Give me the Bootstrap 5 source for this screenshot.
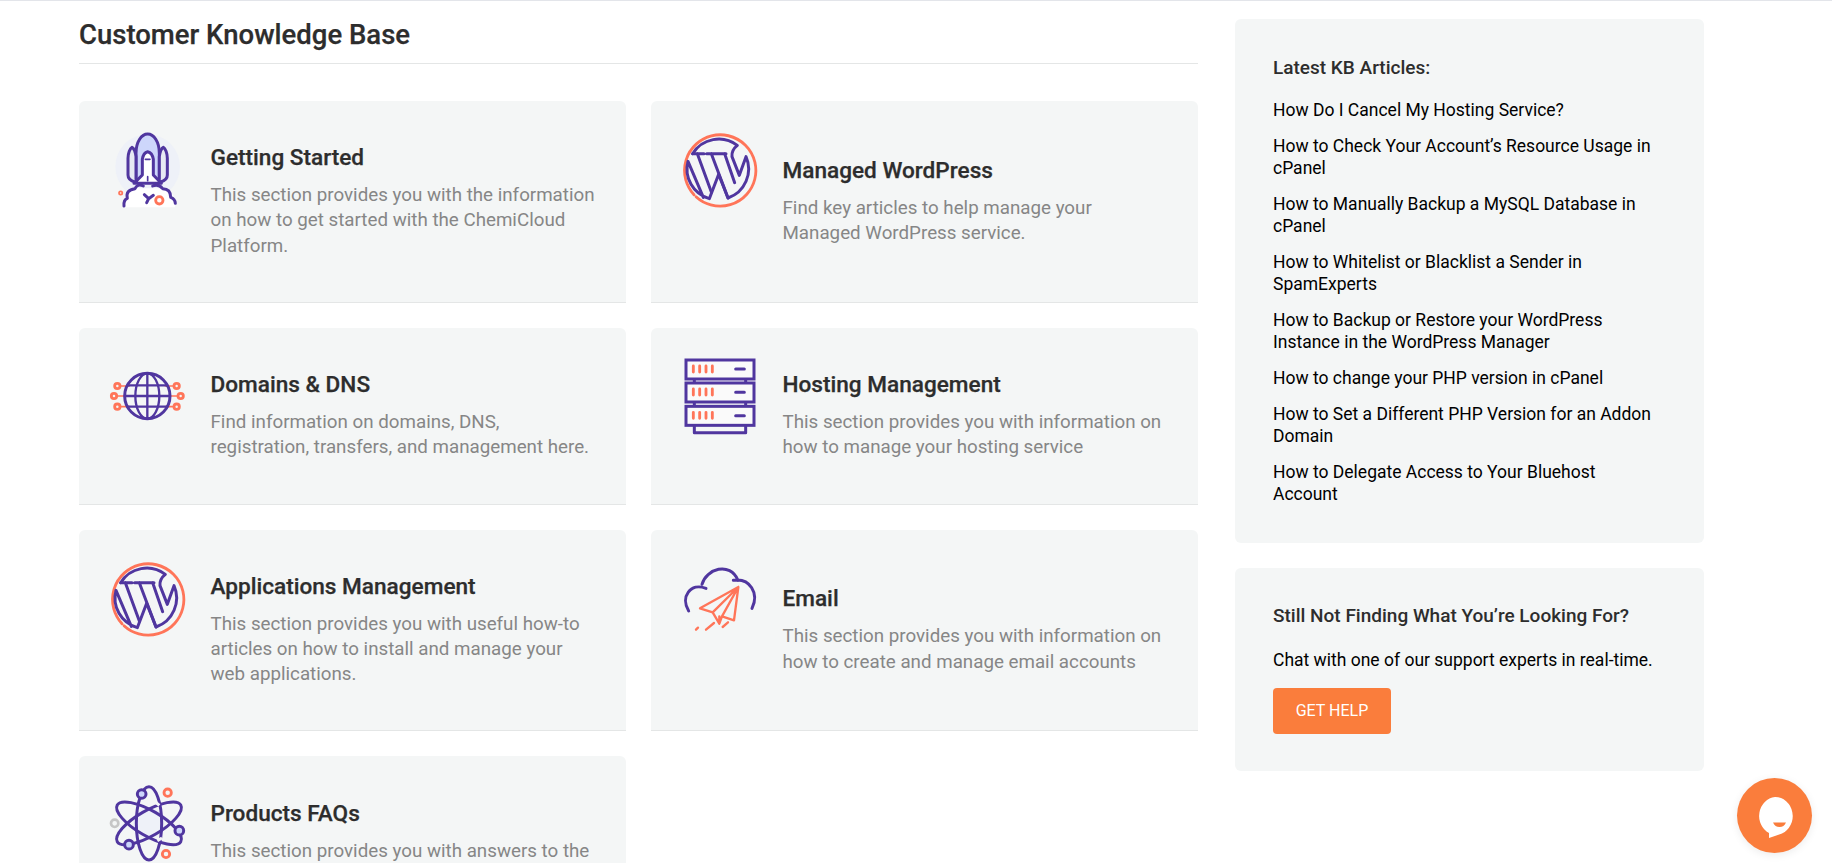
<!doctype html>
<html lang="en">
<head>
  <meta charset="utf-8">
  <meta name="viewport" content="width=device-width, initial-scale=1">
  <title>Customer Knowledge Base</title>
  <link href="https://cdn.jsdelivr.net/npm/bootstrap@5.3.3/dist/css/bootstrap.min.css" rel="stylesheet" crossorigin="anonymous">
  <style>
    html, body { overflow: hidden; height: 863px; }
    body { font-family: Roboto, sans-serif; background: #fff; border-top: 1px solid #e3e5ea; }
    .page-wrap { padding-left: 79px; gap: 37px; }
    .main-col { width: 1119px; flex: none; }
    .side-col { width: 469px; flex: none; margin-top: 18px; }
    .kb-heading { font-size: 27.5px; font-weight: 500; color: #2d2d2d; line-height: 34px; margin: 17px 0 0; padding-bottom: 11px; border-bottom: 1px solid #e4e6e6; margin-bottom: 37px; -webkit-text-stroke: .25px #2d2d2d; }
    .kb-grid { --bs-gutter-x: 25px; --bs-gutter-y: 25px; }
    .kb-card { background: #f4f6f6; border-radius: 6px 6px 0 0; border-bottom: 1px solid #e4e6e6; }
    .kb-icon { width: 100px; height: 100px; flex: none; margin: 20px 11.5px 0 20px; }
    .kb-text { padding: 44.25px 29px 43px 0; }
    .kb-title { font-size: 22.6px; font-weight: 500; color: #2d2d2d; line-height: 25px; margin-bottom: 13px; -webkit-text-stroke: .25px #2d2d2d; }
    .kb-desc { font-size: 18.75px; line-height: 25.2px; color: #868686; margin: 0; }
    .side-box { background: #f4f6f6; border-radius: 6px; padding: 37.5px 46px 37.5px 38px; margin-bottom: 25px; }
    .side-title { font-size: 19px; font-weight: 500; color: #2d2d2d; line-height: 22px; margin: 0; white-space: nowrap; }
    .side-links { margin: 20.5px 0 0; padding: 0; list-style: none; }
    .side-links li { margin-bottom: 14px; font-size: 17.5px; line-height: 22px; }
    .side-links li:last-child { margin-bottom: 0; }
    .side-links a { color: #000; text-decoration: none; }
    .side-copy { font-size: 17.5px; line-height: 22px; color: #000; margin: 21.5px 0 17px; }
    .help-btn { background: #fa7d3c; color: #fff; border: 0; border-radius: 4px; width: 118px; height: 46px; font-size: 16px; padding: 0; }
    .chat-bubble { position: fixed; left: 1737px; top: 778px; width: 75px; height: 75px; border-radius: 50%; background: #fa7d3c; box-shadow: 0 2px 8px rgba(0,0,0,.08); }
    .ic-p { fill: none; stroke: #50369f; stroke-width: 9; stroke-linecap: round; stroke-linejoin: round; }
    .ic-o { fill: none; stroke: #ff7559; stroke-width: 8.5; stroke-linecap: round; stroke-linejoin: round; }
    .ic-g { fill: none; stroke: #c6c6c6; stroke-width: 8; }
    .ic-cut { fill: none; stroke: #f4f6f6; stroke-width: 9; }
    .f-blue { fill: #cdd6fb; }
    .f-pale { fill: #e6e9f3; }
    .f-white { fill: #fff; }
    .w-5 { stroke-width: 5; }
    .w-7 { stroke-width: 7; }
    .cap-b { stroke-linecap: butt; }
  </style>
</head>
<body>
  <svg width="0" height="0" class="d-block position-absolute">
    <symbol id="wp-mark" viewBox="0 0 300 300">
      <path class="ic-o" d="M76 226 A107 107 0 1 1 82 232"/>
      <path class="ic-p" d="M72 103 A92 92 0 0 1 206 78 Q188 92 190 112 L212 168 L232 112 A92 92 0 0 1 178 236 L150 165 L122 238 A92 92 0 0 1 58 126 L104 234"/>
      <path class="ic-p" d="M72 103 H106 M114 103 H172 M86 103 L128 218 M128 103 L178 236 M168 103 L198 190"/>
    </symbol>
  </svg>

  <div class="page-wrap d-flex align-items-start">
    <div class="main-col">
      <h2 class="kb-heading">Customer Knowledge Base</h2>
      <div class="row kb-grid">
        <div class="col-6">
          <div class="kb-card d-flex h-100">
            <svg class="kb-icon" viewBox="-3 3 300 300">
              <circle cx="143" cy="140" r="97" fill="#eef1f8"/>
              <path d="M72 262 V240 Q80 205 105 205 H185 Q218 205 225 245 V262 Z" fill="#fff"/>
              <path class="ic-p f-blue" d="M108 178 V100 C108 65 125 42 143 42 C161 42 178 65 178 100 V178"/>
              <path class="ic-p f-pale" d="M108 178 V110 C106 95 102 85 96 82 C90 85 84 100 84 115 V165 Q84 180 104 186"/>
              <path class="ic-p f-pale" d="M178 178 V110 C180 95 184 85 190 82 C196 85 202 100 202 115 V165 Q202 180 182 186"/>
              <path class="ic-p f-white" d="M127 165 V118 Q130 98 143 95 Q157 98 160 118 V165 L184 190 H102 Z"/>
              <path class="ic-p w-5" d="M136 118 H150 M143 170 V182"/>
              <path class="ic-p" d="M72 258 Q70 240 82 235 Q76 210 105 206 Q112 190 130 198 M158 198 Q175 190 188 206 Q212 206 212 232 Q225 236 226 250 M133 224 L146 236 L160 226 M146 236 L140 248"/>
              <circle class="ic-o" cx="178" cy="241" r="11"/>
              <circle class="ic-o w-5" cx="62" cy="219" r="5"/>
            </svg>
            <div class="kb-text align-self-center">
              <div class="kb-title">Getting Started</div>
              <p class="kb-desc">This section provides you with the information on how to get started with the ChemiCloud Platform.</p>
            </div>
          </div>
        </div>
        <div class="col-6">
          <div class="kb-card d-flex h-100">
            <svg class="kb-icon" viewBox="7 5 300 300"><use href="#wp-mark" width="300" height="300"/></svg>
            <div class="kb-text align-self-center">
              <div class="kb-title">Managed WordPress</div>
              <p class="kb-desc">Find key articles to help manage your Managed WordPress service.</p>
            </div>
          </div>
        </div>
        <div class="col-6">
          <div class="kb-card d-flex h-100">
            <svg class="kb-icon" viewBox="-3 -36 300 300">
              <path class="ic-o w-5" d="M60 78 H88 M50 108 H74 M60 140 H88 M222 78 H196 M234 108 H210 M222 140 H196"/>
              <circle class="ic-o" cx="52" cy="78" r="8"/><circle class="ic-o" cx="42" cy="108" r="8"/><circle class="ic-o" cx="52" cy="140" r="8"/>
              <circle class="ic-o" cx="230" cy="78" r="8"/><circle class="ic-o" cx="242" cy="108" r="8"/><circle class="ic-o" cx="230" cy="140" r="8"/>
              <circle class="ic-p" cx="142" cy="108" r="68"/>
              <ellipse class="ic-p w-7" cx="142" cy="108" rx="36" ry="68"/>
              <path class="ic-p w-7" d="M142 40 V176 M82 76 H202 M75 108 H209 M82 140 H202"/>
            </svg>
            <div class="kb-text align-self-center">
              <div class="kb-title">Domains &amp; DNS</div>
              <p class="kb-desc">Find information on domains, DNS, registration, transfers, and management here.</p>
            </div>
          </div>
        </div>
        <div class="col-6">
          <div class="kb-card d-flex h-100">
            <svg class="kb-icon" viewBox="3 -6 300 300">
              <g fill="#fafafa" stroke="#50369f" stroke-width="9">
                <rect x="48" y="30" width="204" height="57"/>
                <rect x="48" y="99" width="204" height="57"/>
                <rect x="48" y="169" width="204" height="57"/>
              </g>
              <path class="ic-p cap-b" d="M73 87 V99 M227 87 V99 M73 156 V169 M227 156 V169"/>
              <path class="ic-p cap-b" d="M73 226 V248 H227 V226"/>
              <path class="ic-o" d="M70 48 V66 M89 48 V66 M108 48 V66 M127 48 V66 M70 117 V135 M89 117 V135 M108 117 V135 M127 117 V135 M70 187 V205 M89 187 V205 M108 187 V205 M127 187 V205"/>
              <path class="ic-p" d="M197 57 H223 M197 127 H223 M197 197 H223"/>
            </svg>
            <div class="kb-text align-self-center">
              <div class="kb-title">Hosting Management</div>
              <p class="kb-desc">This section provides you with information on how to manage your hosting service</p>
            </div>
          </div>
        </div>
        <div class="col-6">
          <div class="kb-card d-flex h-100">
            <svg class="kb-icon" viewBox="7 5 300 300"><use href="#wp-mark" width="300" height="300"/></svg>
            <div class="kb-text align-self-center">
              <div class="kb-title">Applications Management</div>
              <p class="kb-desc">This section provides you with useful how-to articles on how to install and manage your web applications.</p>
            </div>
          </div>
        </div>
        <div class="col-6">
          <div class="kb-card d-flex h-100">
            <svg class="kb-icon" viewBox="3 -15 300 300">
              <path class="ic-p" d="M56 168 C30 125 62 82 108 100 M96 88 C108 42 180 18 204 76 M190 76 C240 68 268 115 246 160"/>
              <path class="ic-o w-7" d="M205 96 L90 160 L128 172 L148 206 L156 184 L192 196 Z M205 96 L128 172 M205 96 L156 184 L148 206 L148 184"/>
              <path class="ic-o w-7" d="M78 224 L84 218 M108 224 L132 204 M158 216 L174 202"/>
            </svg>
            <div class="kb-text align-self-center">
              <div class="kb-title">Email</div>
              <p class="kb-desc">This section provides you with information on how to create and manage email accounts</p>
            </div>
          </div>
        </div>
        <div class="col-6">
          <div class="kb-card d-flex h-100">
            <svg class="kb-icon" viewBox="-3 6 300 300">
              <circle cx="147" cy="148" r="48" fill="#eef1f8"/>
              <ellipse class="ic-p" cx="147" cy="148" rx="38" ry="110"/>
              <ellipse class="ic-p" cx="147" cy="148" rx="38" ry="110" transform="rotate(60 147 148)"/>
              <ellipse class="ic-p" cx="147" cy="148" rx="38" ry="110" transform="rotate(-60 147 148)"/>
              <path class="ic-cut" d="M80 112 L92 122 M166 84 L178 94 M172 200 L186 192"/>
              <circle class="ic-p f-blue" cx="125" cy="60" r="13"/>
              <circle class="ic-p f-blue" cx="238" cy="170" r="13"/>
              <circle class="ic-p f-blue" cx="87" cy="212" r="13"/>
              <circle class="ic-o" cx="203" cy="56" r="11"/>
              <circle class="ic-o" cx="198" cy="240" r="11"/>
              <circle class="ic-g" cx="44" cy="148" r="11"/>
            </svg>
            <div class="kb-text align-self-center">
              <div class="kb-title">Products FAQs</div>
              <p class="kb-desc">This section provides you with answers to the most common questions about our hosting products.</p>
            </div>
          </div>
        </div>
      </div>
    </div>

    <div class="side-col">
      <div class="side-box">
        <h6 class="side-title">Latest KB Articles:</h6>
        <ul class="side-links">
          <li><a href="#">How Do I Cancel My Hosting Service?</a></li>
          <li><a href="#">How to Check Your Account’s Resource Usage in cPanel</a></li>
          <li><a href="#">How to Manually Backup a MySQL Database in cPanel</a></li>
          <li><a href="#">How to Whitelist or Blacklist a Sender in SpamExperts</a></li>
          <li><a href="#">How to Backup or Restore your WordPress Instance in the WordPress Manager</a></li>
          <li><a href="#">How to change your PHP version in cPanel</a></li>
          <li><a href="#">How to Set a Different PHP Version for an Addon Domain</a></li>
          <li><a href="#">How to Delegate Access to Your Bluehost Account</a></li>
        </ul>
      </div>
      <div class="side-box">
        <h6 class="side-title">Still Not Finding What You’re Looking For?</h6>
        <p class="side-copy">Chat with one of our support experts in real-time.</p>
        <button class="btn help-btn text-uppercase">Get Help</button>
      </div>
    </div>
  </div>

  <div class="chat-bubble">
    <svg width="75" height="75" viewBox="0 0 75 75">
      <path fill="#fff" d="M38 19 A17.5 19 0 0 1 45 55.5 Q38 58 32 60 L32 55 A17.5 19 0 0 1 38 19 Z"/>
      <path fill="#fa7d3c" d="M36 44.5 H49 Q47 49 42.5 49 Q38 49 36 44.5 Z"/>
    </svg>
  </div>
</body>
</html>
